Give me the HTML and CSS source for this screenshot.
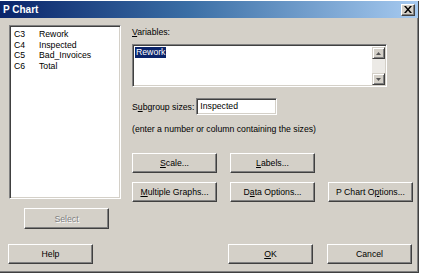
FILE: index.html
```html
<!DOCTYPE html>
<html lang="en">
  <head>
    <meta charset="UTF-8" />
    <title>P Chart</title>
    <link rel="stylesheet" href="styles.css">
  </head>
  <body>
    <div class="dialog">
      <div class="titlebar">
        <span class="title">P Chart</span>
        <span class="close">
          <svg width="8" height="7" viewBox="0 0 8 7">
            <path d="M0 0h2l2 2.5 2-2.5h2l-3 3.5 3 3.5h-2l-2-2.5-2 2.5h-2l3-3.5z" fill="#000" />
          </svg>
        </span>
      </div>

      <div class="main">
        <div class="left">
          <div class="field list">
            <div class="row"><span class="col">C3</span>Rework</div>
            <div class="row"><span class="col">C4</span>Inspected</div>
            <div class="row"><span class="col">C5</span>Bad_Invoices</div>
            <div class="row"><span class="col">C6</span>Total</div>
          </div>
          <button class="btn select" disabled>Select</button>
        </div>

        <div class="right">
          <div class="label"><u>V</u>ariables:</div>
          <div class="field vars">
            <span class="selected">Rework</span>
            <div class="scroll">
              <span class="arrow">
                <svg width="5" height="3" viewBox="0 0 5 3"><path d="M2.5 0L5 3H0z" fill="#555" /></svg>
              </span>
              <span class="arrow">
                <svg width="5" height="3" viewBox="0 0 5 3"><path d="M0 0h5L2.5 3z" fill="#555" /></svg>
              </span>
            </div>
          </div>

          <div class="subgroup">
            <span>S<u>u</u>bgroup sizes:</span>
            <span class="field input">Inspected</span>
          </div>

          <div class="hint">(enter a number or column containing the sizes)</div>

          <div class="buttons first">
            <button class="btn"><u>S</u>cale...</button>
            <button class="btn"><u>L</u>abels...</button>
          </div>
          <div class="buttons">
            <button class="btn"><u>M</u>ultiple Graphs...</button>
            <button class="btn">D<u>a</u>ta Options...</button>
            <button class="btn">P Chart O<u>p</u>tions...</button>
          </div>
        </div>
      </div>

      <div class="footer">
        <button class="btn">Help</button>
        <div class="actions">
          <button class="btn"><u>O</u>K</button>
          <button class="btn">Cancel</button>
        </div>
      </div>
    </div>
  </body>
</html>
```

FILE: styles.css
```css
body {
  margin: 0;
  background-color: #ffffff;
  font-family: "Liberation Sans", Arial, sans-serif;
  font-size: 8.7px;
  color: #000000;
}
.dialog {
  width: 418px;
  height: 271px;
  background-color: #d4d0c8;
  border-right: 1px solid #404040;
  border-bottom: 2px solid #404040;
  box-shadow: inset -1px -1px #808080;
}
.titlebar {
  height: 17px;
  margin-top: 1px;
  display: flex;
  align-items: center;
  justify-content: space-between;
  padding: 0 3px 0 3px;
  background: linear-gradient(to right, #0a246a 0%, #3a6ea5 45%, #a6caf0 100%);
}
.title {
  color: #ffffff;
  font-weight: bold;
  font-size: 10px;
}
.close {
  width: 14px;
  height: 12px;
  box-sizing: border-box;
  display: flex;
  align-items: center;
  justify-content: center;
  background-color: #d4d0c8;
  border: 1px solid;
  border-color: #ffffff #404040 #404040 #ffffff;
  box-shadow: inset -1px -1px #808080;
}
.main {
  display: flex;
  padding: 7px 0 0 9px;
}
.left {
  width: 112px;
  display: flex;
  flex-direction: column;
}
.field {
  background-color: #ffffff;
  box-sizing: border-box;
  border: 1px solid;
  border-color: #808080 #ffffff #ffffff #808080;
  box-shadow: inset 1px 1px #404040, inset -1px -1px #d4d0c8;
}
.list {
  height: 174px;
  padding: 3px 0 0 4px;
}
.row {
  height: 10.5px;
  line-height: 10.5px;
  white-space: nowrap;
}
.col {
  display: inline-block;
  width: 25px;
}
.btn {
  width: 85px;
  height: 20px;
  padding: 0;
  box-sizing: border-box;
  background-color: #d4d0c8;
  border: 1px solid;
  border-color: #ffffff #404040 #404040 #ffffff;
  box-shadow: inset -1px -1px #808080;
  font-family: "Liberation Sans", Arial, sans-serif;
  font-size: 8.7px;
  color: #000000;
}
.select {
  margin: 9px 0 0 15px;
  height: 21px;
  color: #808080;
  text-shadow: 1px 1px #ffffff;
}
.right {
  margin-left: 11px;
  width: 281px;
}
.label {
  height: 13px;
  line-height: 13px;
  margin-top: 1px;
}
.vars {
  width: 255px;
  height: 43px;
  margin-top: 5px;
  display: flex;
  justify-content: space-between;
  padding: 2px 1px 1px 2px;
}
.selected {
  align-self: flex-start;
  background-color: #0a246a;
  color: #ffffff;
  padding: 0 1px;
  line-height: 11px;
}
.scroll {
  width: 13px;
  display: flex;
  flex-direction: column;
  justify-content: space-between;
  background-color: #eceae6;
}
.arrow {
  height: 12px;
  box-sizing: border-box;
  display: flex;
  align-items: center;
  justify-content: center;
  background-color: #d4d0c8;
  border: 1px solid;
  border-color: #d4d0c8 #404040 #404040 #d4d0c8;
  box-shadow: inset 1px 1px #ffffff, inset -1px -1px #808080;
}
.subgroup {
  display: flex;
  align-items: center;
  gap: 2px;
  margin-top: 11px;
}
.input {
  width: 81px;
  height: 17px;
  line-height: 14px;
  padding-left: 3px;
}
.hint {
  margin-top: 8px;
  height: 13px;
  line-height: 13px;
}
.buttons {
  display: flex;
  gap: 13px;
  margin-top: 9px;
}
.buttons.first {
  margin-top: 17px;
}
.footer {
  display: flex;
  justify-content: space-between;
  margin-top: 15px;
  padding: 0 6px 0 8px;
}
.actions {
  display: flex;
  gap: 14px;
}
```
